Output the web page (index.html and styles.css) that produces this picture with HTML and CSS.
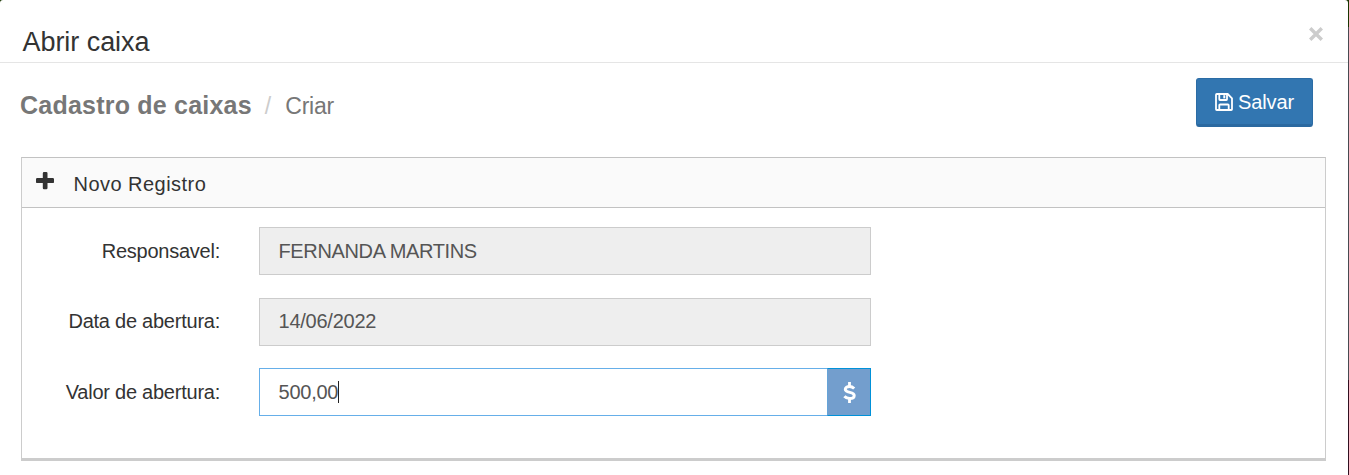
FILE: index.html
```
<!DOCTYPE html>
<html lang="pt-BR">
<head>
<meta charset="utf-8">
<title>Abrir caixa</title>
<link rel="stylesheet" href="styles.css">
</head>
<body>
<div class="modal">
  <header class="modal-header">
    <h1 class="modal-title">Abrir caixa</h1>
    <button class="close" type="button" aria-label="Fechar">
      <svg width="14" height="14" viewBox="0 0 14 14"><path d="M1.2 1.2 12.800 12.800M12.800 1.200 1.200 12.800" stroke="#ccc" stroke-width="3.400"/></svg>
    </button>
  </header>
  <div class="toolbar">
    <div class="breadcrumb"><strong class="crumb-main">Cadastro de caixas</strong><span class="crumb-sep">/</span><span class="crumb-sub">Criar</span></div>
    <button class="save" type="button">
      <svg width="18" height="18" viewBox="0 0 18 18" fill="none" stroke="#fff" stroke-width="1.800"><path d="M1.800 1h10.900L17 5.300v10.900a.8.8 0 0 1-.8.8H1.800a.8.8 0 0 1-.8-.8V1.800A.8.8 0 0 1 1.800 1z"/><path d="M4.300 1v5.300a.7.7 0 0 0 .7.700h6.300a.7.7 0 0 0 .7-.7V1M4.300 17v-4.700a.8.8 0 0 1 .8-.8h7.800a.8.8 0 0 1 .8.800V17"/><path d="M9.300 2.200v3.200" stroke-width="2"/></svg>
      <span class="save-text">Salvar</span>
    </button>
  </div>
  <section class="panel">
    <div class="panel-head">
      <svg class="plus" width="18" height="18" viewBox="0 0 18 18"><path d="M8 0h2.300q1.200 0 1.200 1.200V6h5.300Q18 6 18 7.200v2.700q0 1.200-1.200 1.200h-5.300v4.900q0 1.200-1.200 1.200H8q-1.200 0-1.200-1.200v-4.900H1.200Q0 11.100 0 9.900V7.200Q0 6 1.200 6h5.600V1.200Q6.800 0 8 0z" fill="#333"/></svg>
      <h2 class="panel-title">Novo Registro</h2>
    </div>
    <div class="form">
      <div class="row"><span class="label">Responsavel:</span><div class="field off name">FERNANDA MARTINS</div></div>
      <div class="row"><span class="label">Data de abertura:</span><div class="field off date">14/06/2022</div></div>
      <div class="row"><span class="label">Valor de abertura:</span><div class="field active"><span>500,00</span><i class="caret"></i><b class="addon"><svg width="13" height="21" viewBox="0 0 13 21" fill="none" stroke="#fff"><path d="M11.200 6.500C9.800 5.200 8.500 4.500 6.500 4.500 4.100 4.500 2.300 5.500 2.300 7.200c0 4.200 8.900 2.200 8.900 6.200 0 1.900-1.900 3-4.500 3-2.100 0-4-.7-5.300-2.200" stroke-width="3"/><path d="M6.500 0v4.500M6.500 16v5" stroke-width="2.800"/></svg></b></div></div>
    </div>
  </section>
</div>
</body>
</html>
```
FILE: styles.css
```
* { box-sizing: border-box; }
body { margin: 0; background: linear-gradient(#183600 0 27px, #484a50 27px 380px, #301020 380px); font-family: "Liberation Sans", Arial, sans-serif; color: #333; }
.modal { width: 1348px; height: 475px; background: #fff; border-radius: 3px 3px 0 0; overflow: hidden; }
.modal-header { height: 63px; padding: 0 25px 0 22.500px; border-bottom: 1px solid #e5e5e5; display: flex; justify-content: space-between; }
.modal-title { margin: 27px 0 0; font-size: 27px; font-weight: 400; line-height: 31px; letter-spacing: -.05px; }
.close { margin: 27px 0 0; padding: 0; width: 14px; height: 14px; border: 0; background: none; }
.close svg, .save svg, .plus { display: block; }
.toolbar { height: 94px; padding: 15px 35px 0 20px; display: flex; justify-content: space-between; align-items: flex-start; }
.breadcrumb { display: flex; align-items: baseline; padding-top: 12px; line-height: 30px; color: #777; }
.crumb-main { font-size: 25px; letter-spacing: .22px; }
.crumb-sep { font-size: 23px; color: #ccc; margin: 0 14px 0 13px; }
.crumb-sub { font-size: 23px; letter-spacing: -.2px; }
.save { width: 117px; height: 49px; padding: 0; border: 1px solid #2b6ca5; border-bottom: 3px solid #2b69a0; border-radius: 3px; background: #3276b1; color: #fff; display: flex; align-items: center; justify-content: center; gap: 5px; font: 20px/24px "Liberation Sans", Arial, sans-serif; letter-spacing: -.1px; }
.panel { width: 1305px; height: 304px; margin-left: 21px; border: 1px solid #c2c2c2; border-color: #c2c2c2 #ccc #ccc; border-bottom-width: 3px; }
.panel-head { height: 50px; background: #fafafa; border-bottom: 1px solid #c2c2c2; display: flex; align-items: flex-start; padding: 14px 0 0 14px; }
.panel-title { margin: 0 0 0 19.500px; font-size: 20px; font-weight: 400; line-height: 24px; letter-spacing: .47px; }
.form { padding-top: 19px; display: grid; grid-template-rows: 48px 48px 48px; row-gap: 22.500px; }
.row { display: flex; font-size: 20px; line-height: 24px; align-items: center; letter-spacing: -.24px; }
.label { width: 198px; margin-right: 39px; text-align: right; white-space: nowrap; }
.field { width: 612px; height: 48px; border: 1px solid #ccc; padding-left: 18.500px; display: flex; align-items: center; color: #555; }
.off { background: #eee; }
.name { letter-spacing: -.36px; }
.row:nth-child(2) .label { padding-bottom: 2px; }
.date { padding-bottom: 2px; }
.active { border-color: #66afe9; }
.caret { width: 1px; height: 22px; background: #222; }
.addon { width: 44px; height: 48px; margin: 0 -1px 0 auto; border: 1px solid #0091d9; border-left-color: #66a4d8; background: #739ecd; display: flex; align-items: center; justify-content: center; }
```
